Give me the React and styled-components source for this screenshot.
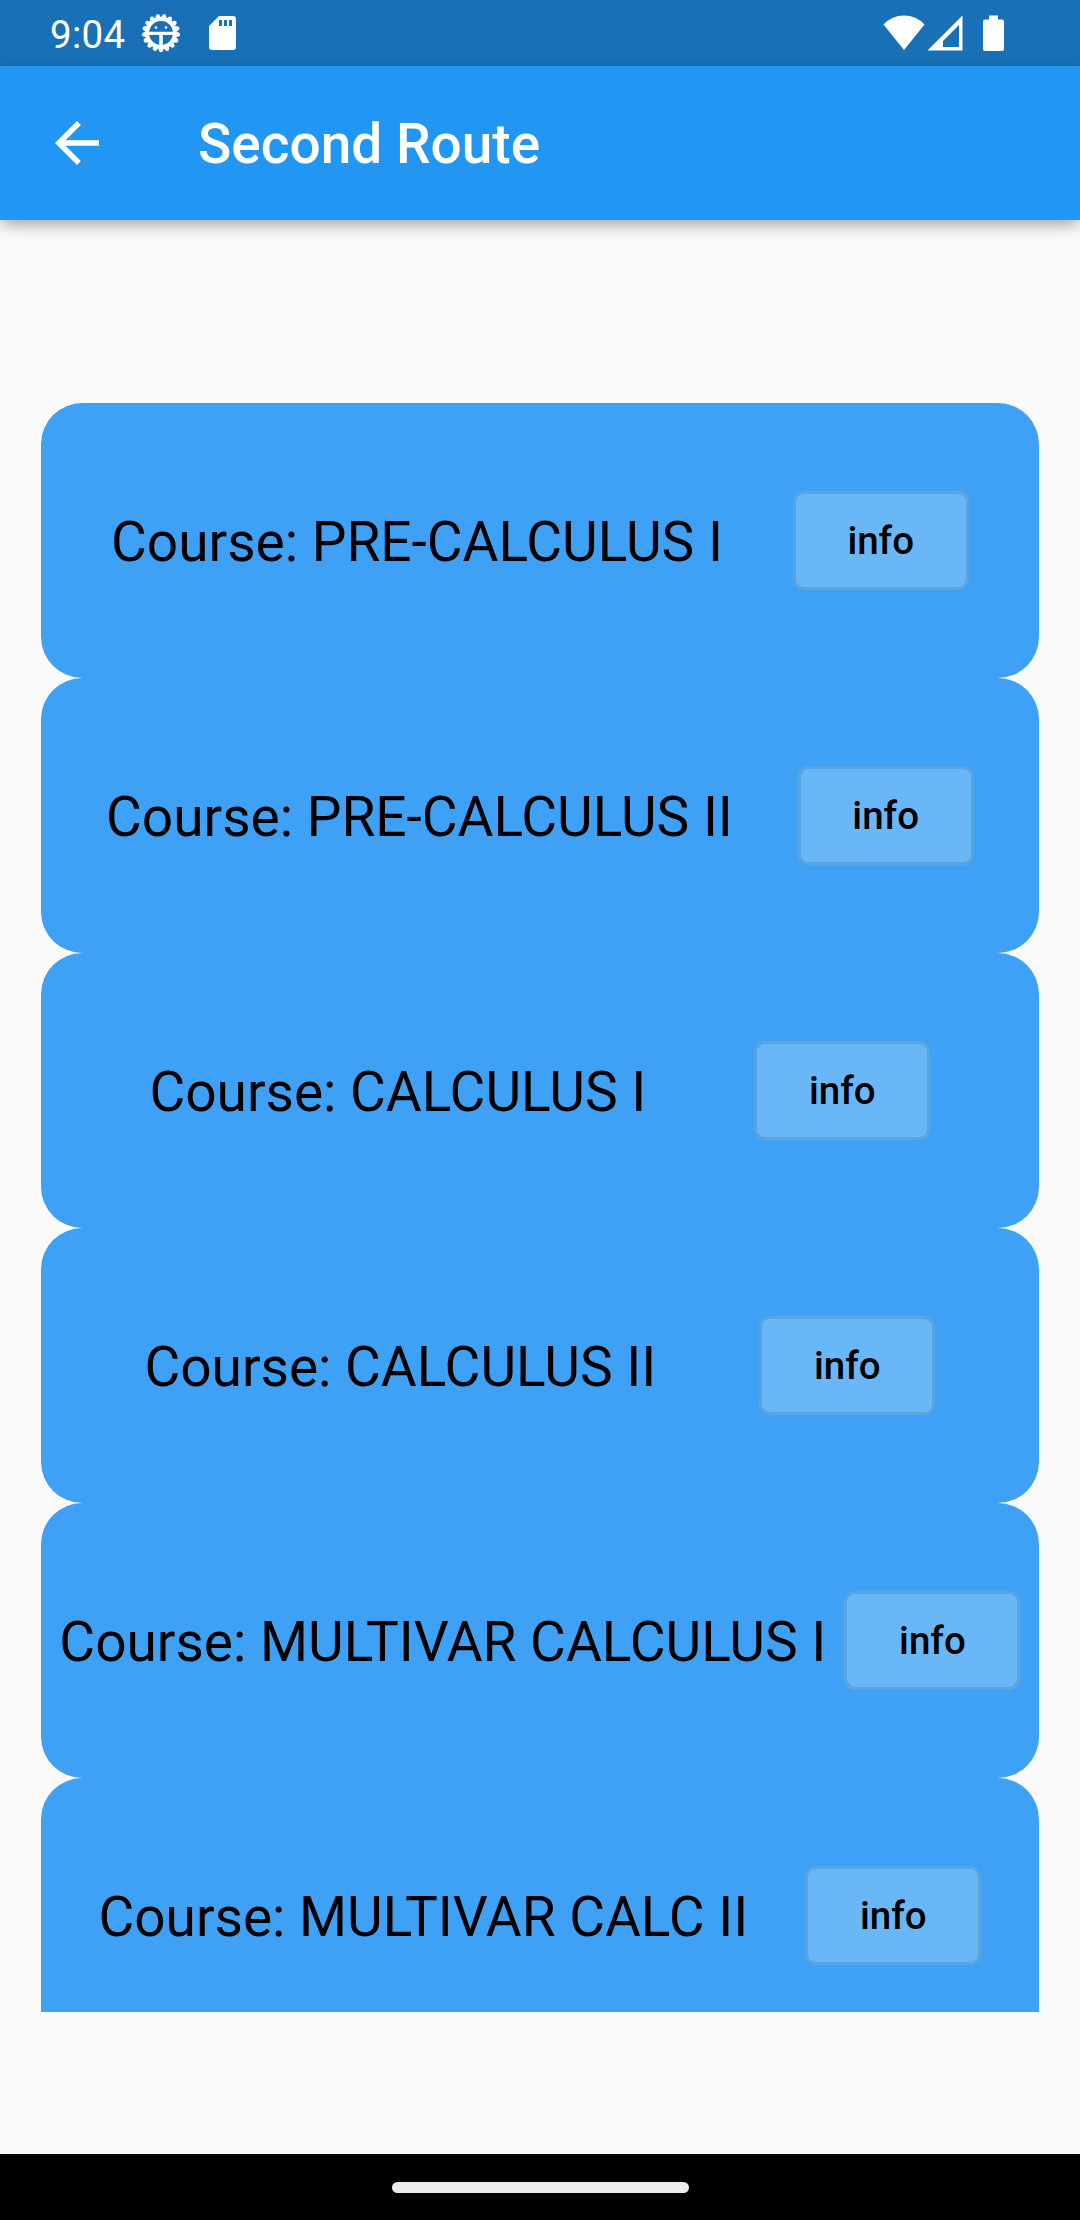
import React from "react";
import styled, { createGlobalStyle } from "styled-components";

const GlobalStyle = createGlobalStyle`
  * { box-sizing: border-box; }
  body { margin: 0; background: #fafafa; font-family: Roboto, sans-serif; }
`;

const Screen = styled.div`
  width: 1080px;
  height: 2220px;
  display: flex;
  flex-direction: column;
  background: #fafafa;
  overflow: hidden;
`;

const StatusBar = styled.header`
  height: 66px;
  flex: none;
  display: flex;
  align-items: center;
  justify-content: space-between;
  padding: 0 75px 0 50px;
  background: #1a70b6;
  color: #fff;
`;

const StatusGroup = styled.div`
  display: flex;
  align-items: center;
`;

const Clock = styled.span`
  font-size: 38.5px;
  line-height: 46px;
  letter-spacing: 0.3px;
  width: 91px;
  padding-top: 3px;
`;

const StatusIcon = styled.svg`
  display: block;
  fill: #fff;
  margin-left: ${(p) => p.$gap || 0}px;
`;

const AppBar = styled.nav`
  height: 154px;
  flex: none;
  display: flex;
  align-items: center;
  background: #2196f3;
  color: #fff;
  box-shadow: 0 7px 14px -2px rgba(0, 0, 0, 0.3), 0 3px 20px rgba(0, 0, 0, 0.06);
`;

const BackButton = styled.button`
  width: 154px;
  height: 154px;
  margin-right: 44px;
  padding: 0;
  border: 0;
  background: none;
  display: flex;
  align-items: center;
  justify-content: center;
`;

const Title = styled.h1`
  margin: 0;
  padding-top: 2px;
  font-size: 55px;
  font-weight: 500;
  line-height: 64px;
`;

const Body = styled.main`
  flex: 1;
  min-height: 0;
  padding: 183px 41.4px 142px 41.2px;
`;

const CourseList = styled.ul`
  height: 100%;
  margin: 0;
  padding: 0;
  list-style: none;
  overflow: hidden;
`;

const CourseCard = styled.li`
  height: 275px;
  display: flex;
  align-items: center;
  justify-content: space-evenly;
  border-radius: 41.25px;
  background: #3ea1f5;
`;

const CourseName = styled.span`
  padding-top: 2px;
  font-size: 55px;
  line-height: 64px;
  white-space: nowrap;
  color: #000;
`;

const InfoButton = styled.button`
  width: 176px;
  height: 99px;
  flex: none;
  padding: 0;
  border: 3px solid #5ca4dd;
  border-radius: 11px;
  background: #6ab7f7;
  color: #000;
  font: 500 38.5px/45px Roboto, sans-serif;
`;

const NavBar = styled.footer`
  height: 66px;
  flex: none;
  display: flex;
  align-items: center;
  justify-content: center;
  background: #000;
`;

const HomeHandle = styled.div`
  width: 297px;
  height: 11px;
  border-radius: 6px;
  background: #ebebeb;
`;

const courses = [
  "PRE-CALCULUS I",
  "PRE-CALCULUS II",
  "CALCULUS I",
  "CALCULUS II",
  "MULTIVAR CALCULUS I",
  "MULTIVAR CALC II",
];

const TOOTH_COUNT = 17;
const teeth = Array.from({ length: TOOTH_COUNT }, (_, i) => 180 + (i * 360) / TOOTH_COUNT);

function GearIcon() {
  return (
    <StatusIcon width="40" height="40" viewBox="-20 -20 40 40">
      {teeth.map((a) => (
        <path key={a} d="M-3.300 -14 L-1.900 -18 Q0 -20.400 1.900 -18 L3.300 -14Z" transform={`rotate(${a})`} />
      ))}
      <circle r="13.700" fill="none" stroke="#fff" strokeWidth="3.600" />
      <circle cx="-5" cy="-5.500" r="1.300" />
      <circle cx="5" cy="-5.500" r="1.300" />
      <path d="M-13 -1.300H13V1.900H1.800V14H-1.800V1.900H-13Z" />
    </StatusIcon>
  );
}

export default function App() {
  return (
    <>
      <GlobalStyle />
      <Screen>
        <StatusBar>
          <StatusGroup>
            <Clock>9:04</Clock>
            <GearIcon />
            <StatusIcon $gap={28} width="27" height="34" viewBox="0 0 27 34">
              <path
                fillRule="evenodd"
                d="M10 0H24Q27 0 27 3V31Q27 34 24 34H3Q0 34 0 31V10ZM10 4V10H13V4ZM15 4V10H18V4ZM20 4V10H23V4Z"
              />
            </StatusIcon>
          </StatusGroup>
          <StatusGroup>
            <StatusIcon width="42" height="36" viewBox="0 0 42 36">
              <path d="M0.500 9.500Q9 0.500 21 0.500T41.500 9.500L21 35Z" />
            </StatusIcon>
            <StatusIcon $gap={2} width="36" height="36" viewBox="0 0 36 36">
              <path fillRule="evenodd" d="M0.500 35.500L35.500 0.500V35.500ZM16 32H32V10L16 26Z" />
            </StatusIcon>
            <StatusIcon $gap={19} width="23" height="36" viewBox="0 0 23 36">
              <path d="M7 0.500H16V4.500H20Q22 4.500 22 6.500V34Q22 36 20 36H3Q1 36 1 34V6.500Q1 4.500 3 4.500H7Z" />
            </StatusIcon>
          </StatusGroup>
        </StatusBar>
        <AppBar>
          <BackButton aria-label="Back">
            <svg width="66" height="66" viewBox="0 0 24 24" fill="#fff">
              <path d="M20 11H7.830l5.590-5.590L12 4l-8 8 8 8 1.410-1.410L7.830 13H20v-2z" />
            </svg>
          </BackButton>
          <Title>Second Route</Title>
        </AppBar>
        <Body>
          <CourseList>
            {courses.map((name) => (
              <CourseCard key={name}>
                <CourseName>Course: {name}</CourseName>
                <InfoButton>info</InfoButton>
              </CourseCard>
            ))}
          </CourseList>
        </Body>
        <NavBar>
          <HomeHandle />
        </NavBar>
      </Screen>
    </>
  );
}
